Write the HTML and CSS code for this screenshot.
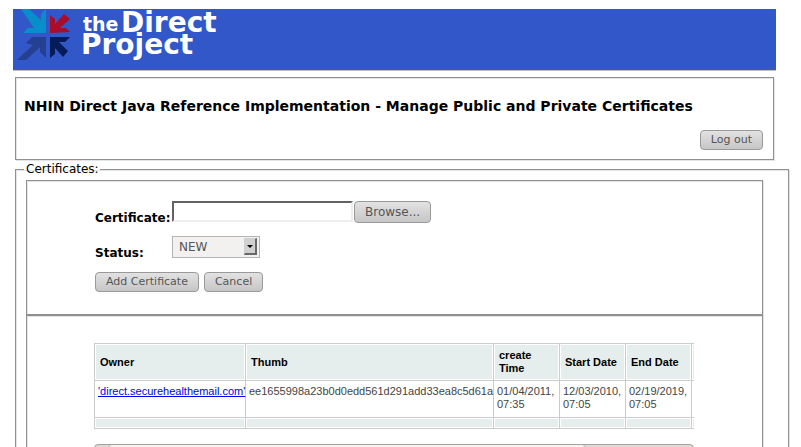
FILE: index.html
```html
<!DOCTYPE html>
<html lang="en">
<head>
<meta charset="utf-8">
<title>Manage Certificates</title>
<link rel="stylesheet" href="styles.css">
</head>
<body>
<header class="banner">
  <svg class="logo" width="210" height="60" viewBox="0 0 210 60" role="img" aria-label="the Direct Project">
    <path fill="#088fca" d="M8 0H16L28 11V5L33 0V24H10L15 19H21Z"/>
    <path fill="#a90d2b" d="M37 24V6L42 10V15L51 5L57 10L47 19H53L57 23Z"/>
    <path fill="#253f91" d="M33 28V49L27 43V38L13 51H4L20 36L13 34L19 28Z"/>
    <path fill="#061c58" d="M37 28H57L52 33H46L55 42L50 48L42 39V45L37 49Z"/>
    <text class="logo-small" x="70" y="22">the</text>
    <text class="logo-large" x="108" y="23">Direct</text>
    <text class="logo-large" x="68" y="45">Project</text>
  </svg>
</header>

<section class="box heading">
  <h1>NHIN Direct Java Reference Implementation - Manage Public and Private Certificates</h1>
  <button class="btn" type="button">Log out</button>
</section>

<fieldset class="box certificates">
  <legend>Certificates:</legend>
  <form class="box panel form">
    <label for="certificate">Certificate:</label>
    <div class="file">
      <input id="certificate" type="text">
      <button class="btn browse" type="button">Browse...</button>
    </div>
    <label for="status">Status:</label>
    <div class="select">
      <select id="status"><option>NEW</option></select>
      <svg class="arrow" width="13" height="17" viewBox="0 0 13 17" aria-hidden="true">
        <path fill="#d0d0d0" d="M0 0H13V17H0Z"/>
        <path fill="#686868" d="M11 1L13 0V17H0L1 15H11Z"/>
        <path d="M3 7H9L6 10Z"/>
      </svg>
    </div>
    <div class="actions">
      <button class="btn" type="button">Add Certificate</button>
      <button class="btn" type="button">Cancel</button>
    </div>
  </form>

  <div class="box panel list">
    <div class="scroller">
      <table>
        <colgroup><col class="owner"><col class="thumb"><col class="date"><col class="date"><col class="date"><col class="more"></colgroup>
        <thead><tr><th>Owner</th><th>Thumb</th><th>create Time</th><th>Start Date</th><th>End Date</th><th></th></tr></thead>
        <tbody><tr><td><a href="#">'direct.securehealthemail.com'</a></td><td>ee1655998a23b0d0edd561d291add33ea8c5d61a</td><td>01/04/2011, 07:35</td><td>12/03/2010, 07:05</td><td>02/19/2019, 07:05</td><td></td></tr></tbody>
        <tfoot><tr><td></td><td></td><td></td><td></td><td></td><td></td></tr></tfoot>
      </table>
      <div class="track"><div class="handle"></div></div>
    </div>
  </div>
</fieldset>
</body>
</html>
```
FILE: styles.css
```css
* { box-sizing: border-box; }

html { overflow: hidden; }

body {
  margin: 0;
  padding: 9px 12px 0 13px;
  background: #fff;
  color: #000;
  font: 12px/14px "DejaVu Sans", sans-serif;
}

.banner {
  margin-right: 13px;
  background: #3157c9;
  border-bottom: 1px solid #555a70;
  box-shadow: 0 1px #c0c0c0;
}

.logo { display: block; height: 60px; width: 210px; }
.logo text { fill: #fff; font-family: "DejaVu Sans", sans-serif; font-weight: bold; }
.logo-small { font-size: 19px; }
.logo-large { font-size: 28px; }

.box {
  margin: 0;
  border: 1px solid #909090;
  box-shadow: inset 1px 1px #e4e4e4, 1px 1px #e4e4e4;
}

.heading {
  display: flex;
  flex-direction: column;
  margin: 7px 15px 0 2px;
  padding: 18px 10px 9px 8px;
}

h1 { margin: 0; font-size: 14px; line-height: 20px; }

.btn {
  height: 20px;
  padding: 0 10px;
  border: 1px solid #999;
  border-radius: 4px;
  background: linear-gradient(#e2e2e2, #c6c6c6);
  color: #555;
  font: 11px/16px "DejaVu Sans", sans-serif;
}

.heading .btn { align-self: flex-end; margin-top: 14px; }

.certificates {
  min-width: 0;
  margin: 2px 0 0 2px;
  padding: 4px 25px 24px 10px;
}

legend { margin-left: -2px; padding: 0 1px 0 2px; }

.panel { padding: 0 68px 0 67px; }

.form {
  display: grid;
  grid-template-columns: 77px 1fr;
  padding-top: 20px;
  padding-bottom: 22px;
  padding-left: 68px;
}

.form label { padding-top: 10px; font-weight: bold; }

.file { display: flex; gap: 1px; height: 35px; }

.file input {
  width: 181px;
  height: 21px;
  padding: 1px 3px;
  border: 2px solid;
  border-color: #626262 #eee #eee #626262;
  background: #fff;
  font: inherit;
}

.file .browse { height: 22px; font-size: 12px; }

.select { position: relative; width: 88px; height: 36px; }

.select select {
  width: 100%;
  height: 22px;
  padding: 0 6px;
  border: 1px solid #b5b5b5;
  border-radius: 0;
  background: #f2f1f0;
  color: #555;
  font: inherit;
  appearance: none;
}

.arrow { position: absolute; top: 2px; right: 3px; pointer-events: none; }

.actions { display: flex; grid-column: 1 / -1; gap: 5px; }

.list { height: 200px; padding-top: 27px; }

.scroller { overflow: hidden; }

table {
  width: 620px;
  table-layout: fixed;
  border-collapse: collapse;
  font: 11px/13px "Liberation Sans", sans-serif;
}

.owner { width: 151px; }
.thumb { width: 248px; }
.date { width: 66px; }

th, td { border: 1px solid #ccc; text-align: left; }

th, tfoot td {
  background: #e6eeed;
  box-shadow: inset 0 0 0 1px #fff;
}

th { height: 37px; padding: 0 5px; }
td { height: 37px; padding: 4px 3px; color: #444; vertical-align: top; }
tfoot td { height: 11px; padding: 0; }
a { color: #00e; }

.track {
  height: 15px;
  margin-top: 15px;
  border: 1px solid #aaa09a;
  border-radius: 4px;
  background: #dedad6;
}

.handle {
  width: 80%;
  height: 13px;
  margin-left: 13px;
  border-left: 1px solid #aaa09a;
  border-right: 1px solid #aaa09a;
  border-radius: 4px;
  background: #f7f5f3;
}
```
